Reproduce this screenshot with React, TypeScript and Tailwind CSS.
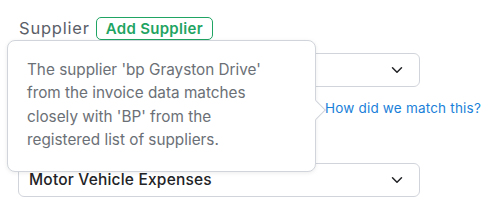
import { ChevronDown } from "lucide-react";

function SelectBox({ value }: { value?: string }) {
  return (
    <div className="w-[402px] h-[34px] border border-[#d1d5db] rounded-[6px] bg-white flex items-center justify-between pl-[10px] pr-[13px]">
      <span className="text-[15.5px] font-medium tracking-[0.2px] text-[#222326]">{value}</span>
      <ChevronDown size={18} strokeWidth={2} className="text-[#222326]" />
    </div>
  );
}

export default function App() {
  return (
    <main className="relative w-[491px] h-[209px] bg-white overflow-hidden font-['Inter',sans-serif]">
      <div className="pt-[17px] pl-[18px] pr-[10px]">
        <div className="flex items-center h-[23px]">
          <span className="text-[16.5px] tracking-[0.8px] text-[#5b6068] ml-[1px]">Supplier</span>
          <button className="ml-[6px] h-[23px] px-[9px] border border-[#1fa463] rounded-[5px] text-[15px] font-semibold tracking-[0.3px] text-[#1fa463] leading-none">
            Add Supplier
          </button>
        </div>

        <div className="mt-[13px]">
          <SelectBox />
        </div>

        <div className="flex justify-end mt-[11px] h-[20px] items-center">
          <a className="text-[13.5px] tracking-[0.2px] text-[#1a7fd9] cursor-pointer">How did we match this?</a>
        </div>

        <div className="mt-[45px]">
          <SelectBox value="Motor Vehicle Expenses" />
        </div>
      </div>

      {/* tooltip */}
      <div className="absolute left-[7px] top-[40px] w-[309px] h-[132px] bg-white border border-[#d1d5db] rounded-[8px] shadow-[0_1px_4px_rgba(0,0,0,0.08)] pl-[19px] pr-[31px] pt-[17px]">
        <p className="text-[15.3px] leading-[23.3px] text-[#6b7076]">
          The supplier 'bp Grayston Drive' from the invoice data matches closely with 'BP' from the registered list of suppliers.
        </p>
        <div className="absolute right-[-8px] top-[62px] w-[14px] h-[14px] bg-white border-t border-r border-[#d1d5db] rotate-45" />
      </div>
    </main>
  );
}
